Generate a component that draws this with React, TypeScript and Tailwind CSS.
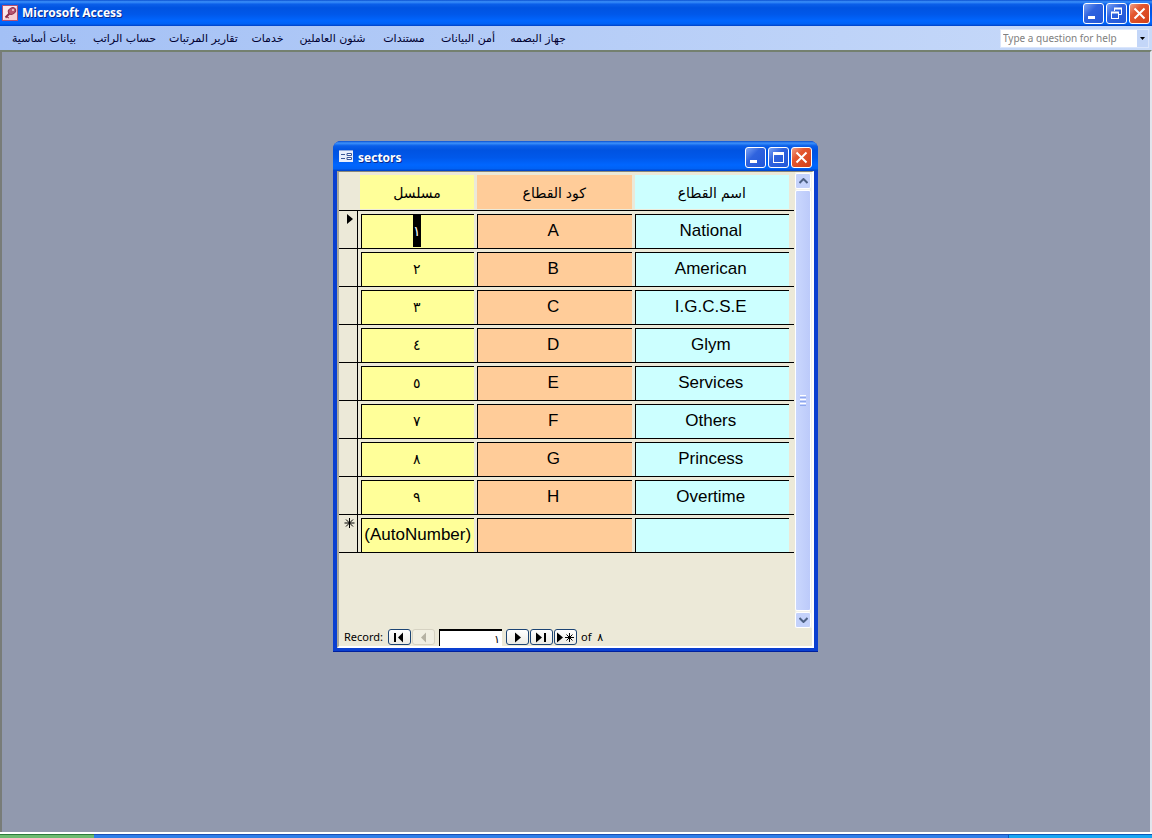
import React from "react";

const menus = [
  { label: "بيانات أساسية", width: "w-[68px]" },
  { label: "حساب الراتب", width: "w-[61px]" },
  { label: "تقارير المرتبات", width: "w-[65px]" },
  { label: "خدمات", width: "w-[31px]" },
  { label: "شئون العاملين", width: "w-[67px]" },
  { label: "مستندات", width: "w-[44px]" },
  { label: "أمن البيانات", width: "w-[52px]" },
  { label: "جهاز البصمه", width: "w-[56px]" },
];

const rows = [
  { id: "١", code: "A", name: "National" },
  { id: "٢", code: "B", name: "American" },
  { id: "٣", code: "C", name: "I.G.C.S.E" },
  { id: "٤", code: "D", name: "Glym" },
  { id: "٥", code: "E", name: "Services" },
  { id: "٧", code: "F", name: "Others" },
  { id: "٨", code: "G", name: "Princess" },
  { id: "٩", code: "H", name: "Overtime" },
  { id: "(AutoNumber)", code: "", name: "" },
];

const titleGradient =
  "bg-[linear-gradient(180deg,#0a4fd0_0%,#3c91fb_7%,#0b5fe9_16%,#0053e1_30%,#0058ea_55%,#0066ff_80%,#0062f5_92%,#0040c4_100%)]";

type Kind = "minimize" | "restore" | "maximize" | "close";

function CaptionButton({ kind, label }: { kind: Kind; label: string }) {
  const color =
    kind === "close"
      ? "bg-[linear-gradient(135deg,#f0a088_0%,#e4572f_35%,#d2401a_100%)]"
      : "bg-[linear-gradient(135deg,#7ba3f5_0%,#2f63de_40%,#2257d8_100%)]";
  return (
    <button type="button" aria-label={label} className={`h-[21px] w-[21px] rounded-[3px] border border-white ${color}`}>
      <svg viewBox="0 0 19 19" className="block h-[19px] w-[19px]" fill="none" stroke="#fff">
        {kind === "minimize" && <rect x="4" y="12" width="7" height="3" fill="#fff" stroke="none" />}
        {kind === "maximize" && (
          <>
            <rect x="4.5" y="4.5" width="10" height="10" />
            <path d="M4 5.500h11" strokeWidth="3" />
          </>
        )}
        {kind === "restore" && (
          <>
            <path d="M7.500 7V4.500h7v6H12" />
            <path d="M7 4.500h8M4 8.500h8" strokeWidth="2" />
            <rect x="4.5" y="8.5" width="7" height="6" />
          </>
        )}
        {kind === "close" && <path d="M4.500 4.500l10 10M14.500 4.500l-10 10" strokeWidth="2" />}
      </svg>
    </button>
  );
}

function AccessIcon() {
  return (
    <svg viewBox="0 0 16 16" className="h-4 w-4 shrink-0">
      <rect x=".5" y=".5" width="15" height="15" fill="#fbe6ea" stroke="#b45070" />
      <path d="M1 15L15 1v14z" fill="#f3cdd5" />
      <path d="M3.5 12.5l5-5" stroke="#8e2c48" strokeWidth="2" />
      <path d="M5 12l2 1" stroke="#8e2c48" />
      <ellipse cx="10" cy="6" rx="3.8" ry="3" transform="rotate(-30 10 6)" fill="#b65470" stroke="#8e2c48" />
      <circle cx="11" cy="5" r="1" fill="#f6d6dc" />
    </svg>
  );
}

function FormIcon() {
  return (
    <svg viewBox="0 0 14 12" className="h-3 w-3.5 shrink-0">
      <rect width="14" height="12" fill="#e8eefb" />
      <path d="M0 .5h14" stroke="#8fa9dc" />
      <path d="M2 4.5h4M2 8.5h4" stroke="#3c5796" />
      <path d="M8 3.5h4.500v2H8zM8 7.500h4.500v2H8z" fill="#fff" stroke="#3c5796" />
    </svg>
  );
}

type Nav = "first" | "prev" | "next" | "last" | "new";

function NavButton({ kind, label }: { kind: Nav; label: string }) {
  const disabled = kind === "prev";
  return (
    <button
      type="button"
      aria-label={label}
      disabled={disabled}
      className={`flex h-4 w-[23px] items-center justify-center rounded-[3px] border ${
        disabled ? "border-[#d6d2c2] bg-[#f1efe2]" : "border-[#1c4473] bg-[linear-gradient(180deg,#ffffff,#ecebe4)]"
      }`}
    >
      <svg viewBox="0 0 19 11" className="h-[11px] w-[19px]" stroke="#000" fill="#000">
        {kind === "first" && (
          <>
            <path d="M5 1v9" strokeWidth="2" />
            <path d="M13 .5v10L8 5.500z" stroke="none" />
          </>
        )}
        {kind === "prev" && <path d="M12 .5v10L7 5.500z" stroke="none" fill="#b5b2a3" />}
        {kind === "next" && <path d="M7 .5v10l6-5z" stroke="none" />}
        {kind === "last" && (
          <>
            <path d="M4 .5v10l6-5z" stroke="none" />
            <path d="M13 1v9" strokeWidth="2" />
          </>
        )}
        {kind === "new" && (
          <>
            <path d="M1 .5v10l6-5z" stroke="none" />
            <path d="M13.500 1v9M9 5.500h9M10.500 2.500l6 6M16.500 2.500l-6 6" fill="none" />
          </>
        )}
      </svg>
    </button>
  );
}

function ScrollButton({ up }: { up?: boolean }) {
  return (
    <button
      type="button"
      aria-label={up ? "Scroll up" : "Scroll down"}
      className="flex h-4 w-4 shrink-0 items-center justify-center rounded-xs border border-white bg-[#c4d2fb]"
    >
      <svg viewBox="0 0 9 6" className="h-1.5 w-[9px]" fill="none" stroke="#4d6185" strokeWidth="2">
        <path d={up ? "M.5 5l4-4 4 4" : "M.5 1l4 4 4-4"} />
      </svg>
    </button>
  );
}

const field =
  "block h-[34px] w-full border-t border-l border-t-black border-l-black text-center leading-8 whitespace-nowrap text-black outline-none";

function SectorTable() {
  return (
    <table className="w-full table-fixed border-collapse font-['Liberation_Sans','DejaVu_Sans',sans-serif]">
      <colgroup>
        <col className="w-[18px]" />
        <col className="w-[117px]" />
        <col />
        <col />
        <col className="w-[5px]" />
      </colgroup>
      <thead>
        <tr className="h-[38px] border-b border-black text-[14px]">
          <td />
          <th className="pt-[3px] pl-[3px] font-normal">
            <div className="h-[34px] bg-[#ffff99] leading-9">مسلسل</div>
          </th>
          <th className="pt-[3px] pl-[3px] font-normal">
            <div className="h-[34px] bg-[#ffcc99] leading-9">كود القطاع</div>
          </th>
          <th className="pt-[3px] pl-[3px] font-normal">
            <div className="h-[34px] bg-[#ccffff] leading-9">اسم القطاع</div>
          </th>
          <td />
        </tr>
      </thead>
      <tbody>
        {rows.map((row, i) => (
          <tr key={row.id} className="h-[38px] border-b border-black">
            <td className="border-r border-black p-0 align-top">
              {i === 0 && (
                <svg viewBox="0 0 17 20" className="h-5 w-[17px]">
                  <path d="M8 3v10l6-5z" />
                </svg>
              )}
              {i === rows.length - 1 && (
                <svg viewBox="0 0 17 20" className="h-5 w-[17px]" stroke="#000">
                  <path d="M10.500 3v10M5.500 8h10M7 4.500l7 7M14 4.500l-7 7" />
                </svg>
              )}
            </td>
            <td className="pt-[3px] pl-[3px]">
              <div
                className={`${field} bg-[#ffff99] ${i === rows.length - 1 ? "text-[17px]" : "pr-0.5 text-[14px]"}`}
              >
                {i === 0 ? <span className="inline-block h-8 bg-black text-white">{row.id}</span> : row.id}
              </div>
            </td>
            <td className="pt-[3px] pl-[3px]">
              <input
                aria-label={`كود القطاع ${row.id}`}
                defaultValue={row.code}
                className={`${field} bg-[#ffcc99] pr-[3px] text-[17px]`}
              />
            </td>
            <td className="pt-[3px] pl-[3px]">
              <input
                aria-label={`اسم القطاع ${row.id}`}
                defaultValue={row.name}
                className={`${field} bg-[#ccffff] pr-[3px] text-[17px]`}
              />
            </td>
            <td />
          </tr>
        ))}
      </tbody>
    </table>
  );
}

function SectorsWindow() {
  return (
    <section
      aria-label="sectors"
      className="flex h-[511px] w-full max-w-[485px] flex-col overflow-hidden rounded-t-lg border-b border-[#00209c] bg-[#0a3fd0]"
    >
      <header className={`flex h-[30px] shrink-0 items-center gap-[5px] px-1.5 ${titleGradient}`}>
        <FormIcon />
        <h2 className="grow pt-1 text-xs font-bold text-white text-shadow-[1px_1px_0_#0a2a8c]">sectors</h2>
        <div className="flex gap-0.5 pt-0.5">
          <CaptionButton kind="minimize" label="Minimize" />
          <CaptionButton kind="maximize" label="Maximize" />
          <CaptionButton kind="close" label="Close" />
        </div>
      </header>
      <div className="mx-1 mb-[3px] flex grow flex-col border-t border-r-2 border-b-2 border-l-2 border-t-[#8a8878] border-r-white border-b-white border-l-[#aca899] bg-[#ece9d8]">
        <div className="flex grow">
          <div className="min-w-0 grow">
            <SectorTable />
          </div>
          <div className="ml-px flex w-[17px] shrink-0 flex-col gap-px bg-[#f3f2ea] pt-px">
            <ScrollButton up />
            <div className="flex w-4 grow flex-col items-center justify-center gap-px rounded-xs border border-white bg-[linear-gradient(90deg,#cad7fd,#bccafa)]">
              <span className="h-px w-1.5 bg-white" />
              <span className="h-px w-1.5 bg-[#8fa8ee]" />
              <span className="h-px w-1.5 bg-white" />
              <span className="h-px w-1.5 bg-[#8fa8ee]" />
              <span className="h-px w-1.5 bg-white" />
              <span className="h-px w-1.5 bg-[#8fa8ee]" />
            </div>
            <ScrollButton />
          </div>
        </div>
        <footer className="flex h-[18px] items-center pl-[5px] text-[11px] leading-4 text-black">
          <label htmlFor="record" className="w-11">
            Record:
          </label>
          <NavButton kind="first" label="First record" />
          <div className="pl-px">
            <NavButton kind="prev" label="Previous record" />
          </div>
          <input
            id="record"
            defaultValue="١"
            className="mr-1 ml-1 h-[17px] w-[63px] border-t-2 border-l border-black bg-white pr-0.5 text-right outline-none"
          />
          <div className="flex gap-px">
            <NavButton kind="next" label="Next record" />
            <NavButton kind="last" label="Last record" />
            <NavButton kind="new" label="New record" />
          </div>
          <span className="pl-1">of&nbsp; ٨</span>
        </footer>
      </div>
    </section>
  );
}

export default function App() {
  return (
    <div className="flex min-h-screen flex-col bg-[#9199ae] font-['Noto_Sans','DejaVu_Sans',sans-serif]">
      <header className={`flex h-[26px] items-center gap-1 pr-0.5 pl-0.5 ${titleGradient}`}>
        <AccessIcon />
        <h1 className="grow text-xs font-bold text-white text-shadow-[1px_1px_0_#0a2a8c]">Microsoft Access</h1>
        <div className="flex gap-0.5">
          <CaptionButton kind="minimize" label="Minimize" />
          <CaptionButton kind="restore" label="Restore" />
          <CaptionButton kind="close" label="Close" />
        </div>
      </header>
      <div className="flex h-6 items-center justify-between bg-[linear-gradient(90deg,#a3c0f5,#c8daf9)] pr-[3px] pl-2.5">
        <nav className="flex gap-4 pt-0.5 font-['DejaVu_Sans',sans-serif] text-[11px] text-[#000030]">
          {menus.map((m) => (
            <button key={m.label} type="button" className={`${m.width} flex justify-center whitespace-nowrap`}>
              {m.label}
            </button>
          ))}
        </nav>
        <div className="flex h-[19px] w-[149px] items-center border border-[#dbe6fb] bg-white">
          <input
            aria-label="Type a question for help"
            placeholder="Type a question for help"
            className="min-w-0 grow pl-0.5 text-[10px] outline-none placeholder:text-[#808080]"
          />
          <button type="button" aria-label="Recent questions" className="flex h-full w-3 items-center justify-center bg-[#c3d6f8]">
            <svg viewBox="0 0 5 3" className="h-[3px] w-[5px]">
              <path d="M0 0h5L2.500 3z" />
            </svg>
          </button>
        </div>
      </div>
      <main className="flex grow items-start justify-center border-t-2 border-r-2 border-l-2 border-t-[#74806f] border-r-[#e2e5ec] border-l-[#787c78] pt-[89px] pr-px">
        <SectorsWindow />
      </main>
      <footer className="flex h-1.5 border-t-2 border-white">
        <div className="w-[94px] border-t border-[#2c7a3c] bg-[#6dbb70]" />
        <div className="grow border-t border-[#1c50b4] bg-[#2f7ee8]" />
        <div className="w-36 border-t border-l border-[#0c59b9] bg-[#18a5f2]" />
      </footer>
    </div>
  );
}
